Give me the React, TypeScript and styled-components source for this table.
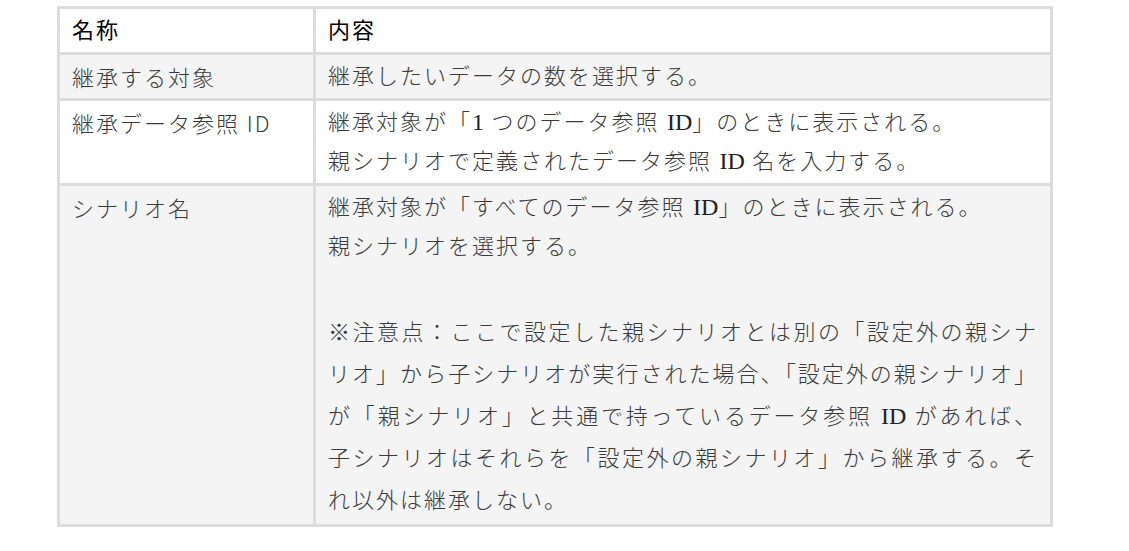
import styled, { createGlobalStyle } from 'styled-components'

const GlobalStyle = createGlobalStyle`
    html, body {
        margin: 0;
        padding: 0;
        background: #ffffff;
    }
    body {
        font-family: "Noto Sans CJK JP", "Noto Sans", sans-serif;
    }
`

const Page = styled.div`
    padding: 6px 0 0 57px;
`

const Table = styled.table`
    width: 996px;
    table-layout: fixed;
    border-collapse: separate;
    border-spacing: 0;
    border-top: 3px solid #dcdcdc;
    border-left: 3px solid #dcdcdc;
    font-size: 22px;
    letter-spacing: 2px;
    line-height: 39px;
`

const Row = styled.tr<{ $shaded?: boolean }>`
    background: ${(p) => (p.$shaded ? '#f4f4f4' : '#ffffff')};
`

const HeadCell = styled.th`
    padding: 0 12px 4px;
    border-right: 3px solid #dcdcdc;
    border-bottom: 3px solid #dcdcdc;
    text-align: left;
    font-weight: 400;
    color: #000000;
    vertical-align: top;
`

const NameCell = styled.td`
    padding: 2px 12px;
    border-right: 3px solid #dcdcdc;
    border-bottom: 3px solid #dcdcdc;
    color: #3a3a3a;
    font-weight: 300;
    vertical-align: top;
`

const DescCell = styled(NameCell)`
    font-family: "Liberation Serif", "Noto Sans CJK JP", serif;
    text-align: justify;
`

const Latin = styled.span`
    font-size: 24px;
    line-height: 1;
    letter-spacing: 0;
    color: #222222;
`

const Note = styled.p`
    margin: 46px 0 0;
    line-height: 42px;
`

const rows = [
    {
        name: '継承する対象',
        desc: <>継承したいデータの数を選択する。</>,
    },
    {
        name: '継承データ参照 ID',
        desc: (
            <>
                継承対象が「<Latin>1</Latin> つのデータ参照 <Latin>ID</Latin>」のときに表示される。
                <br />
                親シナリオで定義されたデータ参照 <Latin>ID</Latin> 名を入力する。
            </>
        ),
    },
    {
        name: 'シナリオ名',
        desc: (
            <>
                継承対象が「すべてのデータ参照 <Latin>ID</Latin>」のときに表示される。
                <br />
                親シナリオを選択する。
                <Note>
                    ※注意点：ここで設定した親シナリオとは別の「設定外の親シナリオ」から子シナリオが実行された場合、「設定外の親シナリオ」が「親シナリオ」と共通で持っているデータ参照 <Latin>ID</Latin> があれば、子シナリオはそれらを「設定外の親シナリオ」から継承する。それ以外は継承しない。
                </Note>
            </>
        ),
    },
]

function App() {
    return (
        <Page>
            <GlobalStyle />
            <Table>
                <colgroup>
                    <col style={{ width: 256 }} />
                    <col style={{ width: 737 }} />
                </colgroup>
                <thead>
                    <Row>
                        <HeadCell>名称</HeadCell>
                        <HeadCell>内容</HeadCell>
                    </Row>
                </thead>
                <tbody>
                    {rows.map((r, i) => (
                        <Row key={r.name} $shaded={i % 2 === 0}>
                            <NameCell>{r.name}</NameCell>
                            <DescCell>{r.desc}</DescCell>
                        </Row>
                    ))}
                </tbody>
            </Table>
        </Page>
    )
}

export default App
